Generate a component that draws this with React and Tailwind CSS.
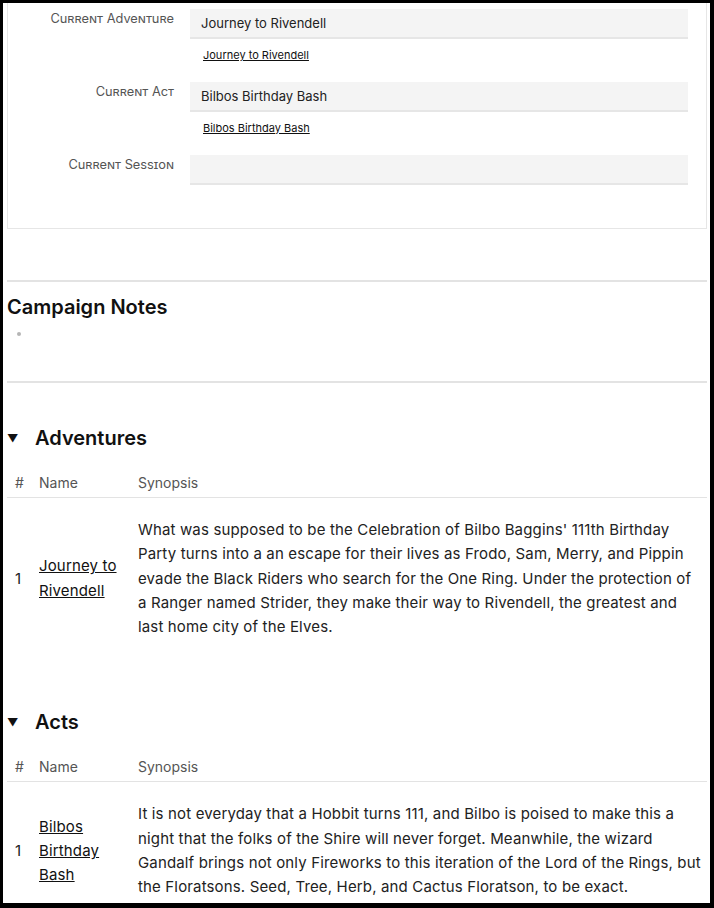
const font = { fontFamily: "Inter, 'Liberation Sans', sans-serif" };

function Field({ label, value }) {
  return (
    <div className="flex">
      <div className="w-[182px] shrink-0 pr-[16px] text-right text-[12.8px] leading-[20px] text-[#555] [font-variant:small-caps]">
        {label}
      </div>
      <div className="flex-1">
        <div className="h-[30px] bg-[#f4f4f4] border-b-2 border-[#e6e6e6] px-[11px] text-[13px] leading-[28px] text-[#222]">
          {value}
        </div>
        <div className="h-[43px] pt-[10px] pl-[13px] text-[11px] leading-[13px]">
          {value && (
            <a href="#" className="text-[#111] underline">
              {value}
            </a>
          )}
        </div>
      </div>
    </div>
  );
}

function Section({ title, name, synopsis }) {
  return (
    <div>
      <h2 className="flex items-center h-[30px] text-[20px] font-semibold text-[#111]">
        <span className="w-[28px] text-[11px]">▼</span>
        {title}
      </h2>
      <table className="w-full mt-[19px] text-left border-collapse">
        <thead>
          <tr className="border-b border-[#e3e3e3] text-[14px] text-[#555]">
            <th className="w-[24px] pl-[8px] pb-[4px] font-normal">#</th>
            <th className="w-[99px] px-[8px] pb-[4px] font-normal">Name</th>
            <th className="pl-[8px] pr-[4px] pb-[4px] font-normal">Synopsis</th>
          </tr>
        </thead>
        <tbody>
          <tr className="text-[15px] leading-[24.3px] tracking-[0.15px] text-[#222]">
            <td className="pl-[8px] align-middle">1</td>
            <td className="px-[8px] align-middle">
              <a href="#" className="underline text-[#111]">{name}</a>
            </td>
            <td className="pl-[8px] pr-[4px] py-[20px]">{synopsis}</td>
          </tr>
        </tbody>
      </table>
    </div>
  );
}

export default function App() {
  return (
    <div className="w-[714px] h-[908px] bg-black pt-[3px] pl-[3px] pr-[4px] pb-[5px] overflow-hidden" style={font}>
      <div className="bg-white h-full overflow-hidden pl-[4px] pr-[3px]">
        <div className="border border-t-0 border-[#e6e6e6] pt-[6px] pr-[18px]">
          <Field label="Current Adventure" value="Journey to Rivendell" />
          <Field label="Current Act" value="Bilbos Birthday Bash" />
          <Field label="Current Session" value="" />
        </div>

        <div className="mt-[51px] border-t-2 border-[#e3e3e3]" />
        <h2 className="mt-[12px] text-[20px] leading-[26px] font-semibold text-[#111]">Campaign Notes</h2>
        <ul className="mt-[6px] pl-[10px] h-[20px]">
          <li className="flex items-center h-[16px]">
            <span className="w-[4px] h-[4px] rounded-full bg-[#b5b5b5]" />
          </li>
        </ul>
        <div className="mt-[35px] border-t-2 border-[#e3e3e3]" />

        <div className="mt-[40px]">
          <Section
            title="Adventures"
            name="Journey to Rivendell"
            synopsis="What was supposed to be the Celebration of Bilbo Baggins' 111th Birthday Party turns into a an escape for their lives as Frodo, Sam, Merry, and Pippin evade the Black Riders who search for the One Ring. Under the protection of a Ranger named Strider, they make their way to Rivendell, the greatest and last home city of the Elves."
          />
        </div>
        <div className="mt-[48px]">
          <Section
            title="Acts"
            name="Bilbos Birthday Bash"
            synopsis="It is not everyday that a Hobbit turns 111, and Bilbo is poised to make this a night that the folks of the Shire will never forget. Meanwhile, the wizard Gandalf brings not only Fireworks to this iteration of the Lord of the Rings, but the Floratsons. Seed, Tree, Herb, and Cactus Floratson, to be exact."
          />
        </div>
      </div>
    </div>
  );
}
